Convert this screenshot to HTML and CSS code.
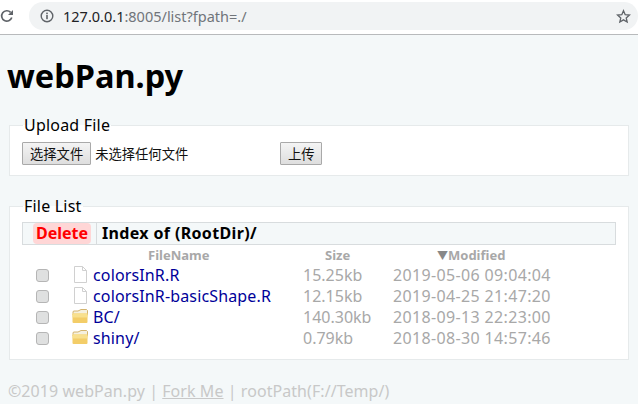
FILE: index.html
```html
<!DOCTYPE html>
<html lang="zh">
<head>
<meta charset="utf-8">
<title>webPan.py</title>
<link rel="stylesheet" href="styles.css">
</head>
<body>
<header class="toolbar">
  <svg class="reload" width="14" height="14" viewBox="0 0 14 14"><path d="M11.8 8.600A5.200 5.200 0 1 1 10.600 3.300" fill="none" stroke="#5f6368" stroke-width="1.700"/><path d="M13 1v5H8z" fill="#5f6368"/></svg>
  <div class="omnibox">
    <svg class="info" width="14" height="14" viewBox="0 0 14 14"><circle cx="7" cy="7" r="5.800" fill="none" stroke="#5f6368" stroke-width="1.400"/><rect x="6.200" y="6" width="1.600" height="4.200" fill="#5f6368"/><rect x="6.200" y="3.600" width="1.600" height="1.600" fill="#5f6368"/></svg>
    <span class="url"><span class="host">127.0.0.1</span>:8005/list?fpath=./</span>
    <svg class="star" width="15" height="15" viewBox="0 0 16 16"><path d="M8 1.900l1.800 4.200 4.500.4-3.400 3 1 4.400L8 11.600l-3.900 2.300 1-4.400-3.400-3 4.500-.4z" fill="none" stroke="#5f6368" stroke-width="1.400"/></svg>
  </div>
</header>
<main class="page">
  <h1 class="title">webPan.py</h1>
  <fieldset class="panel upload">
    <legend class="legend">Upload File</legend>
    <div class="upload-row">
      <button class="btn" type="button">选择文件</button>
      <span class="nofile">未选择任何文件</span>
      <button class="btn btn-send" type="button">上传</button>
    </div>
  </fieldset>
  <fieldset class="panel files">
    <legend class="legend">File List</legend>
    <div class="listbar">
      <div class="delete-cell"><span class="delete">Delete</span></div>
      <div class="index">Index of (RootDir)/</div>
    </div>
    <div class="grid head">
      <span></span><span></span>
      <span class="h-name">FileName</span>
      <span class="h-size">Size</span>
      <span class="h-mod"><span class="tri">▼</span>Modified</span>
    </div>
    <div class="grid row">
      <span class="check"></span>
      <svg class="ico" width="15" height="17" viewBox="0 0 15 17"><path d="M1.500 .5h8l4 4v12h-12z M9.500 .5v4h4" fill="#fff" stroke="#d0d0d0"/></svg>
      <a class="name">colorsInR.R</a><span class="size">15.25kb</span><span class="date">2019-05-06 09:04:04</span>
    </div>
    <div class="grid row">
      <span class="check"></span>
      <svg class="ico" width="15" height="17" viewBox="0 0 15 17"><path d="M1.500 .5h8l4 4v12h-12z M9.500 .5v4h4" fill="#fff" stroke="#d0d0d0"/></svg>
      <a class="name">colorsInR-basicShape.R</a><span class="size">12.15kb</span><span class="date">2019-04-25 21:47:20</span>
    </div>
    <div class="grid row">
      <span class="check"></span>
      <svg class="ico" width="16" height="15" viewBox="0 0 16 15"><path d="M1 4.500 L1 3 Q1 2 2 2H6L9 .5h5.500l1 1V6H1z" fill="#f5f0df" stroke="#c9a24e" stroke-width=".8"/><rect x=".5" y="4.500" width="15" height="9.500" rx="1" fill="#f3cd68"/><rect x=".5" y="4.500" width="15" height="4" fill="#f8e08e"/></svg>
      <a class="name">BC/</a><span class="size">140.30kb</span><span class="date">2018-09-13 22:23:00</span>
    </div>
    <div class="grid row">
      <span class="check"></span>
      <svg class="ico" width="16" height="15" viewBox="0 0 16 15"><path d="M1 4.500 L1 3 Q1 2 2 2H6L9 .5h5.500l1 1V6H1z" fill="#f5f0df" stroke="#c9a24e" stroke-width=".8"/><rect x=".5" y="4.500" width="15" height="9.500" rx="1" fill="#f3cd68"/><rect x=".5" y="4.500" width="15" height="4" fill="#f8e08e"/></svg>
      <a class="name">shiny/</a><span class="size">0.79kb</span><span class="date">2018-08-30 14:57:46</span>
    </div>
  </fieldset>
  <footer class="foot">©2019 webPan.py | <a class="fork">Fork Me</a> | rootPath(F://Temp/)</footer>
</main>
</body>
</html>
```
FILE: styles.css
```css
* { box-sizing: border-box; }
html, body { margin: 0; padding: 0; }
body {
  width: 638px;
  height: 404px;
  overflow: hidden;
  background: #f4f8f9;
  color: #000;
  font-family: "Noto Sans", "Noto Sans CJK SC", sans-serif;
  font-size: 16px;
}
.toolbar {
  height: 35px;
  background: #fff;
  border-bottom: 1px solid #b8babc;
  display: flex;
  align-items: flex-start;
  padding: 2px 0 0 0;
}
.reload { margin: 7px 0 0 0; flex: none; }
.omnibox {
  margin-left: 15px;
  flex: 1;
  height: 28px;
  background: #f1f3f4;
  border-radius: 14px;
  display: flex;
  align-items: center;
  padding: 0 7px 0 11px;
}
.url { margin-left: 9px; font-size: 14.500px; color: #70757a; flex: 1; line-height: 28px; }
.host { color: #202124; }
.page { padding: 0 9px; }
.title {
  margin: 19px 0 0 -2px;
  font-size: 32.500px;
  line-height: 44px;
  font-weight: 700;
  height: 62px;
}
.panel {
  margin: 0;
  min-width: 0;
  background: #fff;
  border: 1px solid #e6eaeb;
  padding: 0 12px;
}
.legend {
  padding: 0 1px;
  margin-left: 1px;
  font-size: 16px;
  line-height: 18px;
  letter-spacing: .2px;
}
.upload { height: 60px; }
.upload-row { display: flex; align-items: center; height: 23px; margin-top: 8px; }
.btn {
  font: 13.300px "Noto Sans CJK SC", sans-serif;
  color: #111;
  height: 23px;
  padding: 0 7px;
  border: 1px solid #a9a9a9;
  background: linear-gradient(#f4f4f4, #dedede);
  border-radius: 1px;
}
.btn-send { width: 42px; padding: 0; }
.nofile { font-size: 13.300px; margin-left: 4px; width: 185px; font-family: "Noto Sans CJK SC", sans-serif; color: #111; }
.files { height: 163px; margin-top: 21px; }
.listbar {
  height: 23px;
  margin-top: 7px;
  display: flex;
  border: 1px solid #d8dcde;
  background: #f4f8f9;
  font-weight: 700;
}
.delete-cell { width: 74px; border-right: 1px solid #d8dcde; padding: 0 0 0 10px; }
.delete {
  display: block;
  width: 58px;
  height: 21px;
  background: #ffd6d6;
  border-radius: 4px;
  color: #f00;
  text-align: center;
  line-height: 21px;
}
.index { padding-left: 5px; line-height: 21px; letter-spacing: .35px; }
.grid {
  display: grid;
  grid-template-columns: 50px 21px 211px 89px 1fr;
  align-items: center;
}
.head { height: 19px; font-size: 13px; font-weight: 700; color: #a8a8a8; }
.h-name { padding-left: 55px; }
.h-size { padding-left: 21px; }
.h-mod { padding-left: 44px; white-space: nowrap; }
.tri { font-size: 11px; color: #888; }
.row { height: 21px; }
.check {
  width: 13px;
  height: 13px;
  margin-left: 14px;
  background: #dfe0e0;
  border: 1px solid #b5b5b5;
  border-radius: 3px;
}
.ico { display: block; justify-self: end; margin: 0 5px 2px 0; }
.name { color: #000099; letter-spacing: .14px; white-space: nowrap; }
.size { color: #a8a8a8; white-space: nowrap; margin-left: -1px; }
.date { color: #a8a8a8; white-space: nowrap; letter-spacing: .35px; }
.foot { margin: 19px 0 0 -1px; color: #c8c8c8; font-size: 16px; line-height: 24px; letter-spacing: .06px; }
.fork { text-decoration: underline; }
```
